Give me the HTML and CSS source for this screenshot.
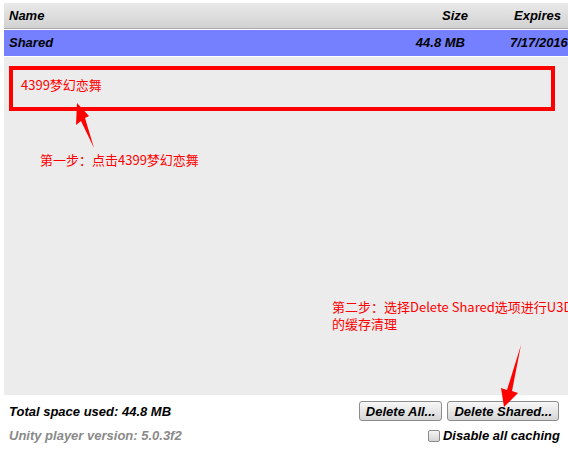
FILE: index.html
```html
<!DOCTYPE html>
<html lang="zh">
<head>
  <meta charset="UTF-8">
  <title>Unity Web Player Cache</title>
  <link rel="stylesheet" href="styles.css">
</head>
<body>
  <div class="panel">
      <div class="list-row list-head">
          <div class="col-name">Name</div>
          <div class="col-size">Size</div>
          <div class="col-exp">Expires</div>
      </div>
      <div class="list-row list-selected">
          <div class="col-name">Shared</div>
          <div class="col-size">44.8 MB</div>
          <div class="col-exp">7/17/2016</div>
      </div>
      <div class="cache-body">
          <div class="highlight">4399梦幻恋舞</div>
          <div class="note note-one">第一步：点击4399梦幻恋舞</div>
          <div class="note note-two">第二步：选择Delete Shared选项进行U3D<br>的缓存清理</div>
      </div>
      <div class="footer">
          <div class="footer-row">
              <span class="total">Total space used: 44.8 MB</span>
              <div class="buttons">
                  <button class="btn">Delete All...</button>
                  <button class="btn">Delete Shared...</button>
              </div>
          </div>
          <div class="footer-row">
              <span class="version">Unity player version: 5.0.3f2</span>
              <label class="check"><span class="box"></span>Disable all caching</label>
          </div>
      </div>
  </div>

  <svg class="arrows" width="568" height="454" viewBox="0 0 568 454">
      <polygon points="77,103 89,116 85,118 94,148 81,121 76,125" fill="#ff0000"/>
      <polygon points="521,345 512,391 518,393 504,407 501,388 507,390" fill="#ff0000"/>
  </svg>
</body>
</html>
```

FILE: styles.css
```css
* {
    margin: 0;
    padding: 0;
    box-sizing: border-box;
}

body {
    font-family: 'Liberation Sans', Arial, sans-serif;
    background: #ffffff;
    width: 568px;
    height: 454px;
    overflow: hidden;
    position: relative;
}

.panel {
    margin: 3px 0 0 4px;
}

.list-row {
    display: grid;
    grid-template-columns: 1fr 106px 58px;
    align-items: center;
    height: 26px;
    font-size: 13px;
    font-weight: bold;
    font-style: italic;
    color: #000;
    white-space: nowrap;
    overflow: hidden;
}

.list-head {
    height: 26px;
    background: linear-gradient(#e9e9e9, #d2d2d2);
    border-bottom: 1px solid #a9a9a9;
}

.list-selected {
    margin-top: 1px;
    padding-bottom: 2px;
    background: #7480ff;
}

.col-name {
    padding-left: 5px;
}

.col-size {
    text-align: right;
    padding-right: 42px;
}

.list-selected .col-size {
    padding-right: 45px;
}

.col-exp {
    overflow: hidden;
}

.list-head .col-exp {
    padding-left: 4px;
}

.cache-body {
    position: relative;
    height: 338px;
    margin-top: 1px;
    background: #ececec;
    padding: 9px 9px 0 5px;
}

.highlight {
    width: 546px;
    height: 45px;
    border: 4px solid #ff0000;
    padding: 5px 0 0 8px;
    color: #ff0000;
    font-family: 'Noto Sans CJK SC', sans-serif;
    font-size: 13px;
}

.note {
    position: absolute;
    color: #ff0000;
    font-family: 'Noto Sans CJK SC', sans-serif;
    font-size: 13px;
    line-height: 17px;
    white-space: nowrap;
}

.note-one {
    left: 36px;
    top: 94px;
}

.note-two {
    left: 328px;
    top: 241px;
    width: 236px;
    overflow: hidden;
}

.footer {
    padding: 6px 9px 0 5px;
}

.footer-row {
    display: flex;
    justify-content: space-between;
    align-items: center;
    font-size: 13px;
    font-weight: bold;
    font-style: italic;
}

.footer-row + .footer-row {
    margin-top: 7px;
}

.version {
    color: #8a8a8a;
}

.buttons {
    display: flex;
    gap: 5px;
}

.btn {
    height: 20px;
    padding: 0 6px;
    font-family: 'Liberation Sans', Arial, sans-serif;
    font-size: 13px;
    font-weight: bold;
    font-style: italic;
    color: #000;
    background: linear-gradient(#f7f7f7, #d6d6d6);
    border: 1px solid #8c8c8c;
    border-radius: 3px;
}

.check {
    display: flex;
    align-items: center;
    gap: 3px;
    margin-right: -1px;
}

.box {
    width: 12px;
    height: 12px;
    border: 1px solid #8c8c8c;
    border-radius: 2px;
    background: linear-gradient(#f4f4f4, #d4d4d4);
}

.arrows {
    position: absolute;
    left: 0;
    top: 0;
    pointer-events: none;
}
```
